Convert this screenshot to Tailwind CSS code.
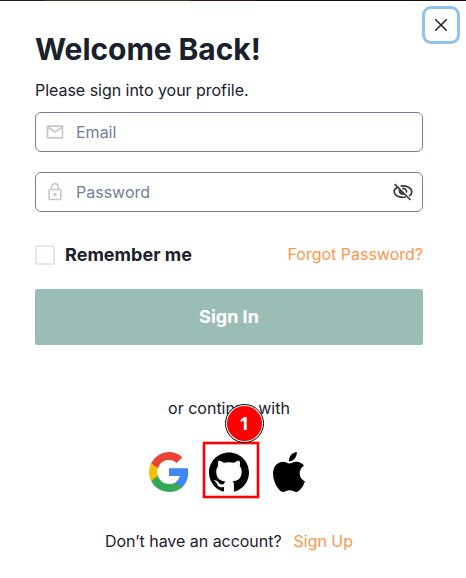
<!DOCTYPE html>
<html lang="en">
<head>
<meta charset="utf-8">
<title>Welcome Back</title>
<script src="https://cdn.jsdelivr.net/npm/@tailwindcss/browser@4"></script>
</head>
<body class="relative h-[578px] w-[466px] overflow-hidden bg-white font-['Inter',sans-serif] text-base text-[#1a202c]">
<div class="flex h-px"><span class="w-11 bg-[#1d1a1c]"></span><span class="w-[146px] bg-[#333b20]"></span><span class="w-16 bg-[#32180d]"></span><span class="grow bg-[#140c0d]"></span></div>
<button aria-label="Close" class="absolute top-[9px] left-[425px] flex size-8 items-center justify-center rounded-md ring-3 ring-[#8ec2ed]">
  <svg class="size-3" viewBox="0 0 12 12" fill="none" stroke="#1a202c" stroke-width="1.5" stroke-linecap="round"><path d="M.7.7l10.6 10.6M11.3.7L.7 11.3"/></svg>
</button>
<main class="ml-[35px] flex w-[388px] flex-col pt-[30px]">
  <h1 class="text-[30px] leading-9 font-bold tracking-[-0.06px] whitespace-nowrap">Welcome Back!</h1>
  <p class="mt-[11px] leading-6 tracking-[-0.03px]">Please sign into your profile.</p>
  <div class="mt-[10px] flex h-10 items-center rounded-md border border-[#718096] pl-[9px]">
    <svg class="size-5" viewBox="0 0 24 24" fill="none" stroke="#c8c8c8" stroke-width="2" stroke-linejoin="round"><path d="M3 5h18v14H3zM3 6l9 6 9-6"/></svg>
    <span class="ml-[11px] text-[#718096]">Email</span>
  </div>
  <div class="mt-5 flex h-10 items-center rounded-md border border-[#718096] pr-[9px] pl-[9px]">
    <svg class="size-5" viewBox="0 0 24 24" fill="#c8c8c8"><path d="M12 17c1.100 0 2-.9 2-2s-.9-2-2-2-2 .9-2 2 .9 2 2 2zm6-9h-1V6c0-2.760-2.240-5-5-5S7 3.240 7 6v2H6c-1.100 0-2 .9-2 2v10c0 1.100.9 2 2 2h12c1.100 0 2-.9 2-2V10c0-1.100-.9-2-2-2zM8.900 6c0-1.710 1.390-3.100 3.100-3.100s3.100 1.390 3.100 3.100v2H8.900V6zM18 20H6V10h12v10z"/></svg>
    <span class="ml-[11px] grow text-[#718096]">Password</span>
    <svg class="size-5" viewBox="0 0 20 20" fill="none" stroke="#3b3b3b" stroke-width="1.700"><path d="M4.400 5.200C2.300 6.400 1.100 7.900 1.100 9.700c0 3.400 4 5.700 8.700 5.700 1 0 2-.1 3-.4M7.600 4.200c5.700-1 11.200 1.700 11.200 5.500 0 1.900-1 3.300-2.700 4.400M9.300 6.500c2.900-.3 4.700 1.600 4.200 4.200"/><path d="M5.900 7C4.800 10.500 7 13.800 11.500 12.900z" fill="#3b3b3b" stroke="none"/><path d="M1.700 2.200l15.800 15.800"/></svg>
  </div>
  <div class="mt-[31px] flex h-6 items-center">
    <span class="size-5 rounded-[2px] border-2 border-[#e2e8f0]"></span>
    <span class="ml-[10px] grow text-lg leading-6 font-bold tracking-[0.03px]">Remember me</span>
    <a class="pb-0.5 leading-6 text-[#ff9549]">Forgot Password?</a>
  </div>
  <button class="mt-[22px] h-14 rounded-[2px] bg-[#9abdb6] text-lg font-bold text-white">Sign In</button>
  <p class="mt-[51px] text-center leading-6">or continue with</p>
  <div class="relative mt-8 flex h-10 items-center pl-[114px]">
    <svg class="size-10" viewBox="0 0 18 18"><path fill="#4285F4" d="M17.640 9.200c0-.637-.057-1.251-.164-1.840H9v3.481h4.844a4.140 4.140 0 0 1-1.796 2.716v2.259h2.908c1.702-1.567 2.684-3.875 2.684-6.615z"/><path fill="#34A853" d="M9 18c2.430 0 4.467-.806 5.956-2.180l-2.908-2.259c-.806.54-1.837.86-3.048.86-2.344 0-4.328-1.584-5.036-3.711H.957v2.332A8.997 8.997 0 0 0 9 18z"/><path fill="#FBBC05" d="M3.964 10.710A5.410 5.410 0 0 1 3.682 9c0-.593.102-1.170.282-1.710V4.958H.957A8.996 8.996 0 0 0 0 9c0 1.452.348 2.827.957 4.042z"/><path fill="#EA4335" d="M9 3.580c1.321 0 2.508.454 3.440 1.345l2.582-2.580C13.463.891 11.426 0 9 0A8.997 8.997 0 0 0 .957 4.958L3.964 7.290C4.672 5.163 6.656 3.580 9 3.580z"/></svg>
    <svg class="ml-5 size-10" viewBox="0 0 24 24" fill="#000"><path d="M12 .297c-6.630 0-12 5.373-12 12 0 5.303 3.438 9.800 8.205 11.385.6.113.82-.258.82-.577 0-.285-.010-1.040-.015-2.040-3.338.724-4.042-1.610-4.042-1.610C4.422 18.070 3.633 17.700 3.633 17.700c-1.087-.744.084-.729.084-.729 1.205.084 1.838 1.236 1.838 1.236 1.070 1.835 2.809 1.305 3.495.998.108-.776.417-1.305.76-1.605-2.665-.3-5.466-1.332-5.466-5.930 0-1.310.465-2.380 1.235-3.220-.135-.303-.54-1.523.105-3.176 0 0 1.005-.322 3.300 1.230.96-.267 1.980-.399 3-.405 1.020.006 2.040.138 3 .405 2.280-1.552 3.285-1.230 3.285-1.230.645 1.653.24 2.873.12 3.176.765.84 1.230 1.910 1.230 3.220 0 4.610-2.805 5.625-5.475 5.920.42.36.81 1.096.81 2.220 0 1.606-.015 2.896-.015 3.286 0 .315.21.69.825.57C20.565 22.092 24 17.592 24 12.297c0-6.627-5.373-12-12-12"/></svg>
    <svg class="ml-6 h-10 w-8" viewBox="2.200 0 19.600 24" preserveAspectRatio="none" fill="#000"><path d="M12.152 6.896c-.948 0-2.415-1.078-3.960-1.040-2.040.027-3.910 1.183-4.961 3.014-2.117 3.675-.546 9.103 1.519 12.090 1.013 1.454 2.208 3.090 3.792 3.039 1.520-.065 2.090-.987 3.935-.987 1.831 0 2.350.987 3.960.948 1.637-.026 2.676-1.480 3.676-2.948 1.156-1.688 1.636-3.325 1.662-3.415-.039-.013-3.182-1.221-3.220-4.857-.026-3.040 2.480-4.494 2.597-4.559-1.429-2.090-3.623-2.324-4.390-2.376-2-.156-3.675 1.090-4.610 1.090zM15.530 3.830c.843-1.012 1.400-2.427 1.245-3.830-1.207.052-2.662.805-3.532 1.818-.78.896-1.454 2.338-1.273 3.714 1.338.104 2.715-.688 3.559-1.701"/></svg>
    <svg class="absolute top-[-12px] left-[166px] size-[60px]" viewBox="0 0 60 60" fill="none"><rect x="3" y="3" width="54" height="54" stroke="#ff0000" stroke-width="2.600"/></svg>
    <div class="absolute top-[-48px] left-[190px] flex size-[39px] items-center justify-center rounded-full border border-black bg-white">
      <span class="flex size-[35px] items-center justify-center rounded-full bg-[#ff0000] pb-px font-['Open_Sans',sans-serif] text-lg font-bold text-white">1</span>
    </div>
  </div>
  <p class="mt-[37px] flex justify-center gap-3 leading-6 tracking-[-0.03px]"><span>Don’t have an account?</span><a class="text-[#ff9549]">Sign Up</a></p>
</main>
</body>
</html>
